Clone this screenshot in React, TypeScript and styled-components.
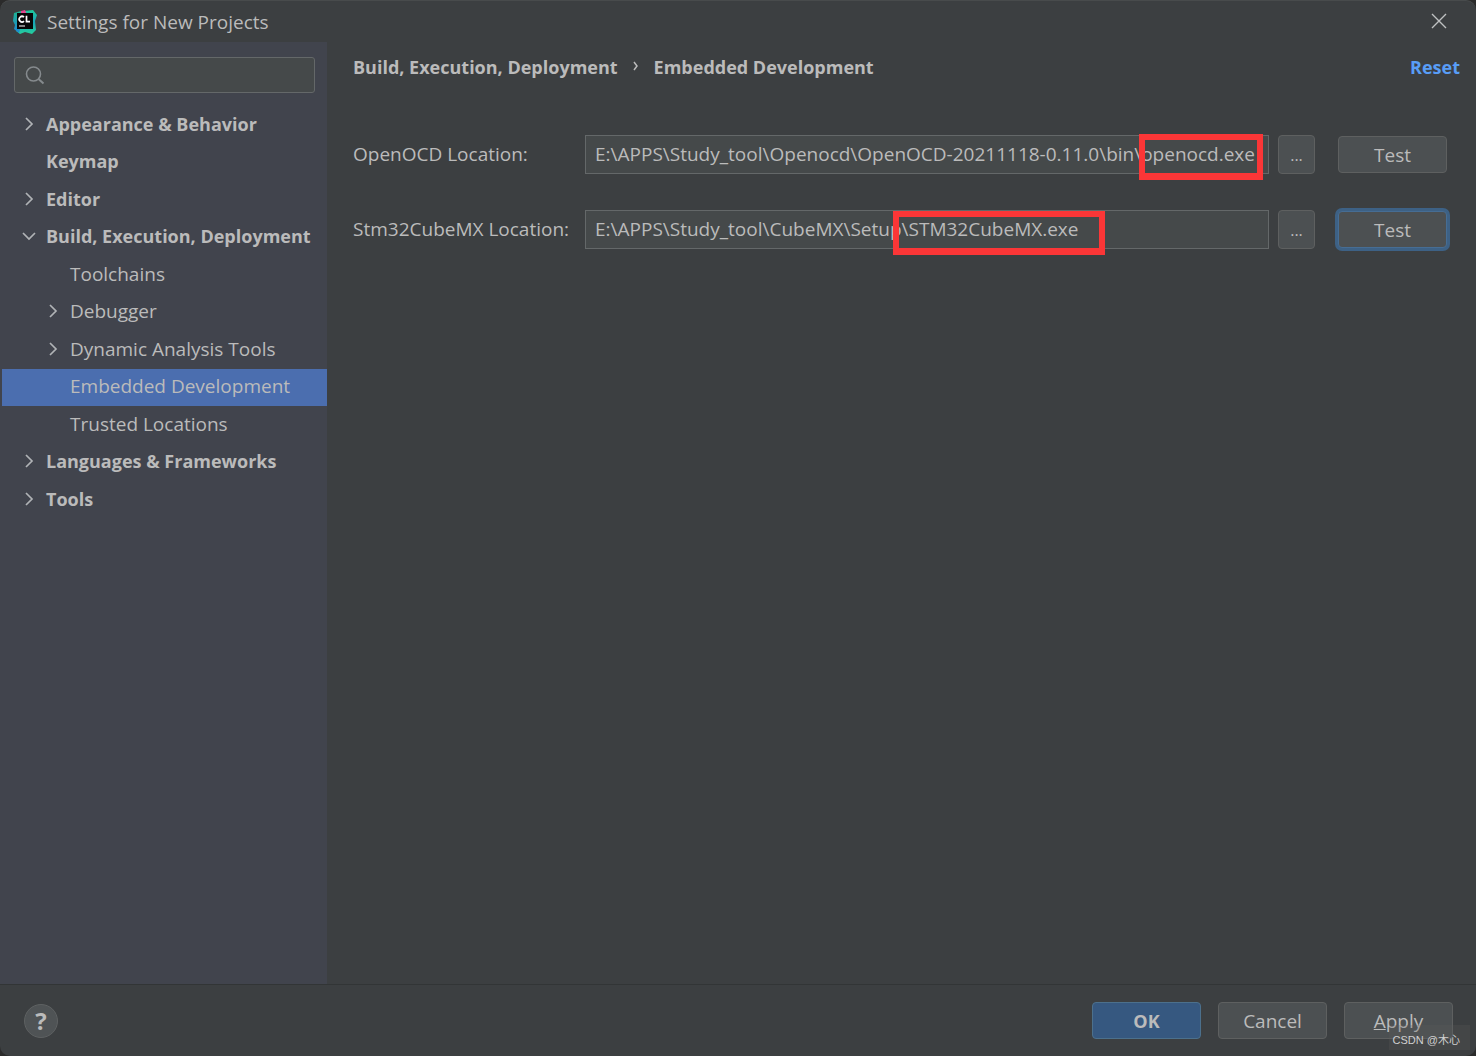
import React, { useState } from "react";
import styled, { createGlobalStyle, css } from "styled-components";

const GlobalStyle = createGlobalStyle`
  * {
    box-sizing: border-box;
  }
  body {
    margin: 0;
    background: #2b2b2b;
    color: #bbbbbb;
    font-family: "Open Sans", "Noto Sans", "Noto Sans CJK SC", sans-serif;
    font-size: 19px;
    line-height: 26px;
  }
  button,
  input {
    font: inherit;
    color: inherit;
  }
`;

const Dialog = styled.div`
  position: relative;
  display: flex;
  flex-direction: column;
  min-height: 100vh;
  overflow: hidden;
  background: #3c3f41;
  border-top: 1px solid #484b4c;
  border-radius: 10px;
`;

const TitleBar = styled.header`
  display: flex;
  align-items: center;
  height: 41px;
  padding: 0 27px 0 12px;
  gap: 9px;
`;

const Title = styled.h1`
  flex: 1;
  margin: 0;
  font-size: 19px;
  font-weight: 400;
`;

const CloseButton = styled.button`
  display: flex;
  padding: 0 0 2px;
  border: 0;
  background: none;
`;

const Body = styled.div`
  display: flex;
  flex: 1;
`;

const Sidebar = styled.nav`
  flex: 0 0 327px;
  padding: 15px 0 0 2px;
  background: #41444d;
`;

const SearchBox = styled.label`
  display: flex;
  align-items: center;
  height: 36px;
  margin: 0 12px 13px;
  padding: 0 10px;
  gap: 8px;
  border: 1px solid #646869;
  border-radius: 3px;
  background: #45494a;
`;

const SearchInput = styled.input`
  flex: 1;
  min-width: 0;
  padding: 0;
  border: 0;
  outline: 0;
  background: none;
`;

const Tree = styled.ul`
  margin: 0;
  padding: 0;
  list-style: none;
`;

const TreeRow = styled.li`
  height: 38px;

  &:nth-child(even) {
    height: 37px;
  }
`;

const TreeItem = styled.button<{ $level: number; $selected: boolean }>`
  display: flex;
  align-items: center;
  width: 100%;
  height: 100%;
  padding: 0 0 3px ${(p) => (p.$level === 0 ? 20 : 44)}px;
  gap: 10px;
  border: 0;
  background: ${(p) => (p.$selected ? "#4b6eaf" : "transparent")};
  white-space: nowrap;
  text-align: left;
  ${(p) =>
    p.$level === 0 &&
    css`
      font-size: 18px;
      font-weight: 700;
    `}
`;

const ArrowSlot = styled.span`
  display: flex;
  width: 14px;
  height: 14px;
`;

const Content = styled.main`
  flex: 1;
  min-width: 0;
  padding: 12px 16px 0 26px;
`;

const Heading = styled.div`
  display: flex;
  align-items: center;
  justify-content: space-between;
  margin-bottom: 55px;
  font-size: 18px;
  font-weight: 700;
`;

const Breadcrumb = styled.h2`
  display: flex;
  align-items: center;
  gap: 15px;
  margin: 0;
  font: inherit;
`;

const ResetLink = styled.a`
  color: #589df6;
  text-decoration: none;
`;

const SettingRow = styled.div`
  display: grid;
  grid-template-columns: 232px minmax(0, 1fr) 46px 132px;
  align-items: center;
  margin: 0 13px 36px 0;
`;

const FieldLabel = styled.label`
  padding-bottom: 2px;
  white-space: nowrap;
`;

const Field = styled.div`
  position: relative;
  display: flex;
`;

const PathInput = styled.input`
  width: 100%;
  height: 39px;
  padding: 0 9px 1px;
  border: 1px solid #646869;
  outline: 0;
  background: #45494a;
`;

const Highlight = styled.span<{ $left: number; $top: number; $width: number; $height: number }>`
  position: absolute;
  left: ${(p) => p.$left}px;
  top: ${(p) => p.$top}px;
  width: ${(p) => p.$width}px;
  height: ${(p) => p.$height}px;
  border: 6px solid #fb3637;
  border-bottom-width: 7px;
  pointer-events: none;
`;

const Button = styled.button<{ $primary?: boolean; $active?: boolean }>`
  justify-self: end;
  width: 109px;
  height: 37px;
  padding: 0;
  border: 1px solid ${(p) => (p.$primary ? "#4c708c" : "#5e6060")};
  border-radius: 4px;
  outline: 0;
  background: ${(p) => (p.$primary ? "#365880" : "#4c5052")};
  ${(p) =>
    p.$primary &&
    css`
      font-size: 18px;
      font-weight: 700;
    `}
  ${(p) =>
    p.$active &&
    css`
      border-color: #466d94;
      box-shadow: 0 0 0 3px #3d6185;
    `}
`;

const BrowseButton = styled(Button)`
  width: 37px;
  height: 39px;
  font-size: 16px;
`;

const Footer = styled.footer`
  display: flex;
  align-items: center;
  height: 72px;
  padding: 0 23px 0 24px;
  gap: 17px;
  border-top: 1px solid #323536;
`;

const HelpButton = styled.button`
  width: 34px;
  height: 34px;
  margin-right: auto;
  padding: 0;
  border: 1px solid #5e6162;
  border-radius: 50%;
  background: #4f5355;
  font-size: 24px;
  font-weight: 700;
  line-height: 30px;
`;

const Watermark = styled.div`
  position: absolute;
  right: 6px;
  bottom: 6px;
  padding: 5px 10px 0 4px;
  background: rgba(90, 92, 90, 0.25);
  color: #d0d0d0;
  font-family: "Liberation Sans", "Noto Sans CJK SC", sans-serif;
  font-size: 11px;
  line-height: 20px;
  pointer-events: none;
`;

const AppLogo = () => (
  <svg width="26" height="26" viewBox="0 0 26 26" aria-hidden="true">
    <defs>
      <linearGradient id="logo-right" x1="0" y1="0" x2="0" y2="1">
        <stop offset="0" stopColor="#1fc99a" />
        <stop offset="0.5" stopColor="#1aa5b8" />
        <stop offset="1" stopColor="#25cf9c" />
      </linearGradient>
      <linearGradient id="logo-left" x1="0" y1="0" x2="0" y2="1">
        <stop offset="0" stopColor="#1fb58f" />
        <stop offset="1" stopColor="#1c86d6" />
      </linearGradient>
    </defs>
    <path d="m12 2 9-1 4 5-2 6 1 9-4 4-7-2-5 2-4-3 5-8Z" fill="url(#logo-right)" />
    <path d="M2 4 9 2l3 5-4 13-1 4-5-4 1-4-2-4Z" fill="url(#logo-left)" />
    <path d="m9 2 4-1 2 5H9Z" fill="#e5458f" />
    <path d="M5 4h16v16H5Z" fill="#070707" />
    <path
      d="M12 8.2a2.8 2.8 0 1 0 0 4M14.5 6.8v5.9H18"
      fill="none"
      stroke="#ffffff"
      strokeWidth="1.7"
    />
    <path d="M7 17h6" stroke="#ffffff" strokeWidth="1" />
  </svg>
);

const CloseIcon = () => (
  <svg width="20" height="20" viewBox="0 0 20 20" aria-hidden="true">
    <path d="m3 3 14 14M17 3 3 17" stroke="#bfc1c2" strokeWidth="1.4" />
  </svg>
);

const SearchIcon = () => (
  <svg width="20" height="20" viewBox="0 0 20 20" fill="none" stroke="#858a8d" strokeWidth="1.6" aria-hidden="true">
    <circle cx="8.5" cy="9" r="7" />
    <path d="m13.5 14 5 4.5" strokeWidth="2" />
  </svg>
);

const Chevron = ({ open }: { open: boolean }) => (
  <svg width="14" height="14" viewBox="0 0 14 14" fill="none" stroke="#b0b3b6" strokeWidth="1.7" aria-hidden="true">
    <path d={open ? "m1 4 6 6 6-6" : "m4 1 6 6-6 6"} />
  </svg>
);

const CrumbArrow = () => (
  <svg width="6" height="12" viewBox="0 0 6 12" fill="none" stroke="#bbbbbb" strokeWidth="1.5" aria-hidden="true">
    <path d="m1 1 3 4-3 4" />
  </svg>
);

type Node = { label: string; level: number; arrow?: "open" | "closed" };

const NODES: Node[] = [
  { label: "Appearance & Behavior", level: 0, arrow: "closed" },
  { label: "Keymap", level: 0 },
  { label: "Editor", level: 0, arrow: "closed" },
  { label: "Build, Execution, Deployment", level: 0, arrow: "open" },
  { label: "Toolchains", level: 1 },
  { label: "Debugger", level: 1, arrow: "closed" },
  { label: "Dynamic Analysis Tools", level: 1, arrow: "closed" },
  { label: "Embedded Development", level: 1 },
  { label: "Trusted Locations", level: 1 },
  { label: "Languages & Frameworks", level: 0, arrow: "closed" },
  { label: "Tools", level: 0, arrow: "closed" },
];

const SETTINGS = [
  {
    id: "openocd",
    label: "OpenOCD Location:",
    path: "E:\\APPS\\Study_tool\\Openocd\\OpenOCD-20211118-0.11.0\\bin\\openocd.exe",
    mark: { $left: 554, $top: -1, $width: 124, $height: 46 },
    active: false,
  },
  {
    id: "cubemx",
    label: "Stm32CubeMX Location:",
    path: "E:\\APPS\\Study_tool\\CubeMX\\Setup\\STM32CubeMX.exe",
    mark: { $left: 308, $top: 1, $width: 212, $height: 44 },
    active: true,
  },
];

export default function App() {
  const [selected, setSelected] = useState("Embedded Development");
  return (
    <>
      <GlobalStyle />
      <Dialog>
        <TitleBar>
          <AppLogo />
          <Title>Settings for New Projects</Title>
          <CloseButton aria-label="Close">
            <CloseIcon />
          </CloseButton>
        </TitleBar>
        <Body>
          <Sidebar>
            <SearchBox>
              <SearchIcon />
              <SearchInput type="text" aria-label="Search settings" />
            </SearchBox>
            <Tree>
              {NODES.map((node) => (
                <TreeRow key={node.label}>
                  <TreeItem
                    $level={node.level}
                    $selected={node.label === selected}
                    onClick={() => setSelected(node.label)}
                  >
                    <ArrowSlot>{node.arrow && <Chevron open={node.arrow === "open"} />}</ArrowSlot>
                    {node.label}
                  </TreeItem>
                </TreeRow>
              ))}
            </Tree>
          </Sidebar>
          <Content>
            <Heading>
              <Breadcrumb>
                <span>Build, Execution, Deployment</span>
                <CrumbArrow />
                <span>Embedded Development</span>
              </Breadcrumb>
              <ResetLink href="#reset">Reset</ResetLink>
            </Heading>
            {SETTINGS.map((s) => (
              <SettingRow key={s.id}>
                <FieldLabel htmlFor={s.id}>{s.label}</FieldLabel>
                <Field>
                  <PathInput id={s.id} type="text" defaultValue={s.path} />
                  <Highlight {...s.mark} />
                </Field>
                <BrowseButton aria-label={`Browse for ${s.label}`}>...</BrowseButton>
                <Button $active={s.active}>Test</Button>
              </SettingRow>
            ))}
          </Content>
        </Body>
        <Footer>
          <HelpButton aria-label="Help">?</HelpButton>
          <Button $primary>OK</Button>
          <Button>Cancel</Button>
          <Button>
            <u>A</u>pply
          </Button>
        </Footer>
        <Watermark>CSDN @木心</Watermark>
      </Dialog>
    </>
  );
}
